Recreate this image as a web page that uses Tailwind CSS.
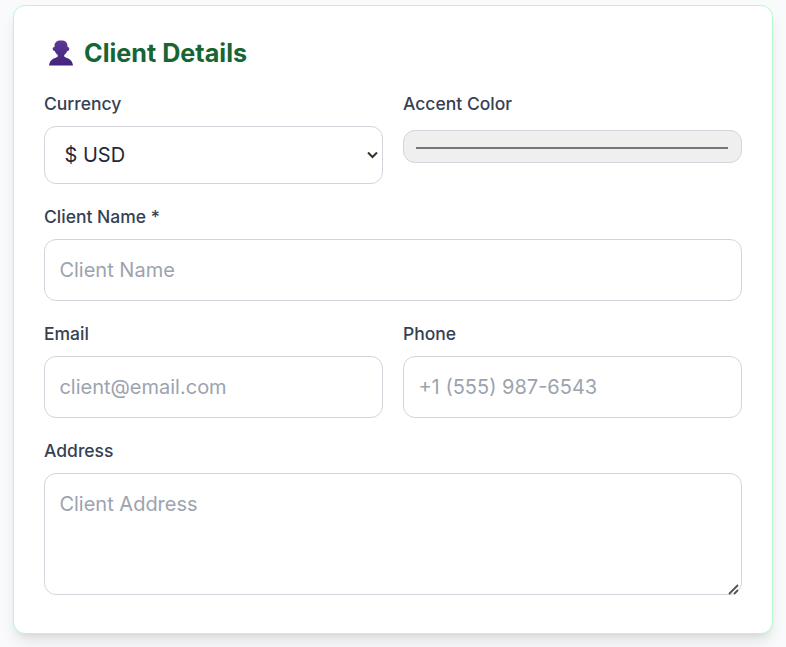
<!DOCTYPE html>
<html lang="en">
<head>
  <meta charset="UTF-8" />
  <meta name="viewport" content="width=device-width, initial-scale=1" />
  <title>Client Details</title>
  <script src="https://cdn.jsdelivr.net/npm/@tailwindcss/browser@4"></script>
</head>
<body class="bg-[#f9fafb] h-[647px] overflow-hidden font-['Inter',sans-serif]">
  <div class="mx-[13px] mt-[5px] w-[760px] bg-white border border-green-200 rounded-xl shadow-lg px-[30px] pt-[31px] pb-[38px]">
    <h2 class="flex items-center gap-[11px] text-[25.2px] leading-8 font-bold text-[#166534] mb-[22px]">
      <svg class="w-6 h-[26px] ml-[5px] shrink-0" viewBox="0 0 24 26">
        <defs>
          <linearGradient id="bust" x1="0" y1="0" x2="0" y2="1">
            <stop offset="0" stop-color="#5a3a96" />
            <stop offset="1" stop-color="#44237c" />
          </linearGradient>
        </defs>
        <path fill="url(#bust)" d="M12 .5C7.500 .5 5.500 2.500 5.500 6L5.500 7C4 7 3.500 8 3.800 9.200C4 10.500 4.800 11 5.800 11C6.300 12.800 7.500 14 8.800 15L8.800 16.500C7.500 17.800 5 18 3.200 19.500C1 21 .3 23.500 0 25.500L24 25.500C23.700 23.500 23 21 20.800 19.500C19 18 16.500 17.800 15.200 16.500L15.200 15C16.500 14 17.700 12.800 18.200 11C19.200 11 20 10.500 20.200 9.200C20.500 8 20 7 18.500 7L18.500 6C18.500 2.500 16.500 .5 12 .5z"/>
      </svg>
      Client Details
    </h2>

    <div class="grid grid-cols-2 gap-x-5">
      <div>
        <label class="block text-[17.5px] leading-[26px] font-[450] text-gray-700 mb-[9px]" for="currency">Currency</label>
        <div class="relative">
          <select id="currency" class="block w-full h-[58px] pl-[19.500px] pr-8 appearance-none text-xl text-gray-800 bg-white border border-gray-300 rounded-xl">
            <option>$ USD</option>
          </select>
          <svg class="absolute right-[5px] top-[25px] w-[11px] h-[8px] pointer-events-none" viewBox="0 0 11 8" fill="none" stroke="#333" stroke-width="2">
            <path d="M1 1.500l4.500 4.500 4.500-4.500" />
          </svg>
        </div>
      </div>
      <div>
        <label class="block text-[17.5px] leading-[26px] font-[450] text-gray-700 mb-[13px]" for="accent">Accent Color</label>
        <input id="accent" type="color" value="#ffffff" class="block w-full h-[33px] pl-[10px] pr-[11px] py-[15px] bg-[#efefef] border border-gray-300 rounded-xl" />
      </div>
    </div>

    <div class="mt-5">
      <label class="block text-[17.5px] leading-[26px] font-[450] text-gray-700 mb-[9px]" for="name">Client Name *</label>
      <input id="name" type="text" placeholder="Client Name" class="block w-full h-[62px] px-[14.4px] text-xl border border-gray-300 rounded-xl placeholder:text-[#9ca3af]" />
    </div>

    <div class="grid grid-cols-2 gap-x-5 mt-5">
      <div>
        <label class="block text-[17.5px] leading-[26px] font-[450] text-gray-700 mb-[9px]" for="email">Email</label>
        <input id="email" type="email" placeholder="client@email.com" class="block w-full h-[62px] px-[14.4px] text-xl border border-gray-300 rounded-xl placeholder:text-[#9ca3af]" />
      </div>
      <div>
        <label class="block text-[17.5px] leading-[26px] font-[450] text-gray-700 mb-[9px]" for="phone">Phone</label>
        <input id="phone" type="tel" placeholder="+1 (555) 987-6543" class="block w-full h-[62px] px-[14.4px] text-xl border border-gray-300 rounded-xl placeholder:text-[#9ca3af]" />
      </div>
    </div>

    <div class="mt-5">
      <label class="block text-[17.5px] leading-[26px] font-[450] text-gray-700 mb-[9px]" for="address">Address</label>
      <div class="relative">
        <textarea id="address" placeholder="Client Address" class="block w-full h-[122px] px-[14.4px] py-4 text-xl border border-gray-300 rounded-xl resize-none placeholder:text-[#9ca3af]"></textarea>
        <!-- resize grip -->
        <svg class="absolute right-[2px] bottom-0 w-3 h-3 pointer-events-none" viewBox="0 0 12 12" fill="none">
          <path d="M6 12H10.500Q12 12 12 10.500V6z" fill="#fff" />
          <path d="M1 11L10 2M6 11l4-4" stroke="#555" stroke-width="1.800" />
        </svg>
      </div>
    </div>
  </div>
</body>
</html>
